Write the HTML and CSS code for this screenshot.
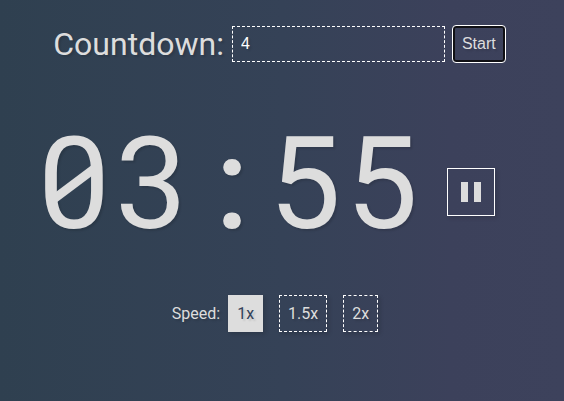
FILE: index.html
```html
<!DOCTYPE html>
<html lang="en">
<head>
<meta charset="utf-8">
<title>Countdown</title>
<link rel="stylesheet" href="styles.css">
</head>
<body>
<main class="app">
  <form class="setup">
    <label class="title" for="minutes">Countdown:</label>
    <input class="minutes" id="minutes" type="text" value="4">
    <button class="start" type="button">Start</button>
  </form>
  <section class="timer">
    <div class="clock"><span class="digit slashed">0</span><span class="digit">3</span><span class="digit colon">:</span><span class="digit">5</span><span class="digit">5</span></div>
    <button class="pause" type="button" aria-label="Pause">
      <svg class="pause-icon" viewBox="0 0 20 20" aria-hidden="true"><path d="M0 0h7v20H0zM13 0h7v20h-7z"/></svg>
    </button>
  </section>
  <section class="speed">
    <span class="speed-label">Speed:</span>
    <button class="rate active" type="button">1x</button>
    <button class="rate" type="button">1.5x</button>
    <button class="rate" type="button">2x</button>
  </section>
</main>
</body>
</html>
```
FILE: styles.css
```css
* {
  box-sizing: border-box;
}

body {
  margin: 0;
  min-height: 100vh;
  background: linear-gradient(to right, #2f4050, #354257 50%, #3c415b 80%, #3d425c);
  color: #ddd;
  font: 16px/20px Roboto, sans-serif;
  text-shadow: 2px 2px 2px rgba(0, 0, 0, 0.12);
}

button,
input {
  margin: 0;
  color: inherit;
  background: none;
  text-shadow: inherit;
}

.app {
  display: flex;
  flex-direction: column;
  align-items: center;
  padding: 25px 32px;
}

.setup {
  display: flex;
  align-items: center;
  gap: 8px;
  margin-right: 6px;
}

.title {
  font-size: 32px;
  line-height: 38px;
}

.minutes {
  flex: 0 1 213px;
  min-width: 0;
  height: 36px;
  padding: 8px;
  border: 1px dashed #fff;
  color: #fff;
  font: 16px/18px "Liberation Sans", sans-serif;
  outline: none;
}

.start {
  height: 36px;
  padding: 0 7px;
  border: 2px solid #101014;
  border-radius: 3px;
  outline: 1px solid #fff;
  font: 16px/18px "Liberation Sans", sans-serif;
}

.timer {
  display: flex;
  align-items: center;
  gap: 26px;
  margin-top: 45px;
  margin-right: 34px;
}

.clock {
  display: flex;
  padding-bottom: 16px;
  font-size: 128px;
  line-height: 152px;
}

.digit {
  position: relative;
  width: 77px;
  text-align: center;
}

.colon {
  padding-left: 8px;
  font-weight: 500;
}

/* Diagonal bar inside the zero */
.slashed::after {
  content: "";
  position: absolute;
  left: 19px;
  top: 55px;
  width: 40px;
  height: 41px;
  background: #ddd;
  clip-path: polygon(0 73%, 100% 0, 100% 27%, 0 100%);
}

.pause {
  display: grid;
  place-items: center;
  width: 48px;
  height: 48px;
  padding: 0;
  border: 1px solid #fff;
  box-shadow: 2px 2px 4px rgba(0, 0, 0, 0.15);
}

.pause-icon {
  width: 20px;
  height: 20px;
  fill: #ddd;
}

.speed {
  display: flex;
  align-items: center;
  gap: 16px;
  margin-top: 19px;
  margin-right: 14px;
}

.speed-label {
  margin-right: -8px;
}

.rate {
  height: 37px;
  padding: 0 8px;
  border: 1px dashed #fff;
  box-shadow: 2px 2px 4px rgba(0, 0, 0, 0.15);
  font: 16px/20px Roboto, sans-serif;
}

.rate.active {
  border: 1px solid #ddd;
  background: #ddd;
  color: #34425a;
}
```
